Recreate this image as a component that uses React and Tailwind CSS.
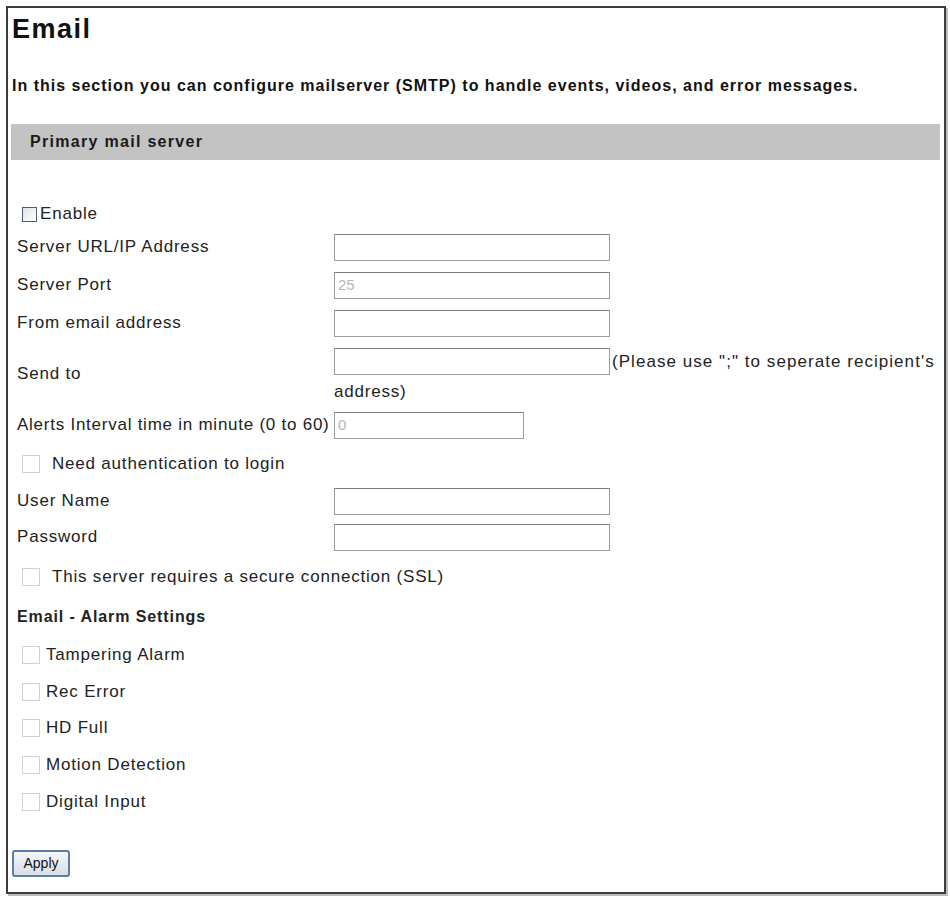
import React from "react";

const TextBox = ({ value, width = "w-[276px]" }) => (
  <div
    className={`${width} h-[27px] border border-[#9c9c9c] border-t-[#7f7f7f] bg-white flex items-center px-[3px] text-[15px] tracking-normal text-[#b5b5b5]`}
  >
    {value}
  </div>
);

const Box = ({ dark }) => (
  <span
    className={
      dark
        ? "inline-block w-[15px] h-[15px] border border-[#4f5d6c] bg-gradient-to-br from-[#dfe3e8] to-white"
        : "inline-block w-[18px] h-[18px] border border-[#d2d2d2] bg-white"
    }
  />
);

const FieldRow = ({ label, value, h = "h-[38px]" }) => (
  <div className={`flex items-center ${h}`}>
    <div className="w-[326px] pl-[9px]">{label}</div>
    <TextBox value={value} />
  </div>
);

const CheckRow = ({ label, h, textPad = "ml-[6px]" }) => (
  <div className={`flex items-center pl-[14px] ${h}`}>
    <Box />
    <span className={textPad}>{label}</span>
  </div>
);

export default function App() {
  return (
    <div
      className="bg-white w-[950px] h-[898px] pt-[6px] pl-[6px] text-[#222] text-[17px] tracking-[0.8px]"
      style={{ fontFamily: '"Liberation Sans", Arial, sans-serif' }}
    >
      <div className="w-[940px] h-[888px] border-2 border-[#3c3c3c] shadow-[2px_2px_0_#bdbdbd] flex flex-col">
        <h1 className="pl-[4px] pt-[6px] h-[38px] text-[27px] leading-[30px] font-bold tracking-[1.5px] text-[#111]">
          Email
        </h1>
        <p className="pl-[4px] mt-[30px] text-[16px] font-bold leading-[20px] tracking-[1px] text-[#111] whitespace-nowrap">
          In this section you can configure mailserver (SMTP) to handle events, videos, and error messages.
        </p>
        <div className="ml-[3px] mr-[4px] mt-[28px] h-[36px] bg-[#c3c3c3] flex items-center pl-[19px] text-[16px] font-bold tracking-[1.3px] text-[#1a1a1a]">
          Primary mail server
        </div>

        <div className="flex items-center pl-[14px] mt-[40px] h-[28px]">
          <Box dark />
          <span className="ml-[3px]">Enable</span>
        </div>

        <FieldRow label="Server URL/IP Address" />
        <FieldRow label="Server Port" value="25" />
        <FieldRow label="From email address" />

        <div className="flex items-center h-[64px]">
          <div className="w-[326px] pl-[9px]">Send to</div>
          <div className="flex flex-col pt-[1px]">
            <div className="flex items-center">
              <TextBox />
              <span className="ml-[2px] tracking-[1.05px] whitespace-nowrap">(Please use ";" to seperate recipient's</span>
            </div>
            <div className="h-[26px] leading-[33px]">address)</div>
          </div>
        </div>

        <div className="flex items-center h-[38px]">
          <div className="w-[326px] pl-[9px] whitespace-nowrap tracking-[0.75px]">Alerts Interval time in minute (0 to 60)</div>
          <TextBox value="0" width="w-[190px]" />
        </div>

        <CheckRow label="Need authentication to login" h="h-[40px]" textPad="ml-[12px]" />
        <FieldRow label="User Name" h="h-[34px]" />
        <FieldRow label="Password" h="h-[38px]" />
        <CheckRow label="This server requires a secure connection (SSL)" h="h-[42px]" textPad="ml-[12px]" />

        <div className="h-[38px] flex items-center pl-[9px] text-[16px] font-bold tracking-[0.9px]">
          Email - Alarm Settings
        </div>

        <CheckRow label="Tampering Alarm" h="h-[38px]" />
        <CheckRow label="Rec Error" h="h-[36px]" />
        <CheckRow label="HD Full" h="h-[36px]" />
        <CheckRow label="Motion Detection" h="h-[38px]" />
        <CheckRow label="Digital Input" h="h-[36px]" />

        <div className="pl-[4px] mt-[30px]">
          <button className="w-[58px] h-[27px] border-2 border-[#5a7ea6] rounded-[3px] bg-gradient-to-b from-[#f4f6f9] to-[#d9dfe7] text-[14px] tracking-normal text-[#111] flex items-center justify-center">
            Apply
          </button>
        </div>
      </div>
    </div>
  );
}
